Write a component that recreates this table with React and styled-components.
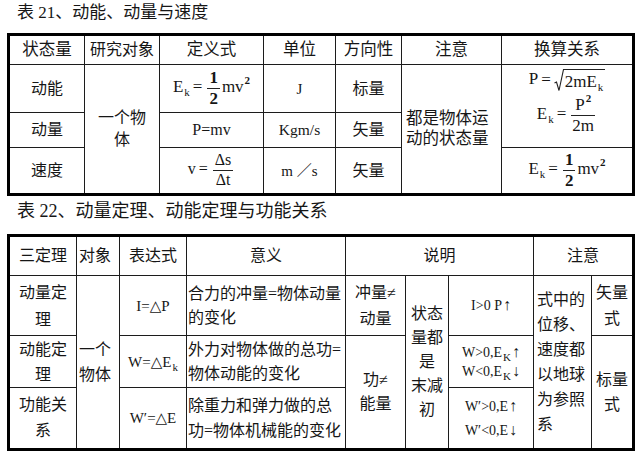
import React from "react";
import styled, { createGlobalStyle } from "styled-components";

const GlobalStyle = createGlobalStyle`
  html, body {
    margin: 0;
    padding: 0;
    background: #ffffff;
  }
  body {
    font-family: "Liberation Serif", "DejaVu Serif", "Noto Sans CJK SC", serif;
    color: #161616;
  }
  table {
    font-family: inherit;
  }
`;

const SERIF = `"Liberation Serif", "DejaVu Serif", "Noto Sans CJK SC", serif`;

const Page = styled.div`
  width: 640px;
  height: 456px;
  padding-left: 7px;
  box-sizing: border-box;
  overflow: hidden;
  font-family: ${SERIF};
`;

const Caption = styled.div`
  height: ${(p) => p.$h}px;
  line-height: ${(p) => p.$lh}px;
  padding-left: 10px;
  font-size: ${(p) => p.$size}px;
  white-space: nowrap;
`;

const Table = styled.table`
  width: 625px;
  border-collapse: collapse;
  table-layout: fixed;
  border: 3px solid #000;
  font-family: ${SERIF};
`;

const Col = styled.col`
  width: ${(p) => p.$w}px;
`;

const Row = styled.tr`
  height: ${(p) => p.$h}px;
`;

const Cell = styled.td`
  border: 1px solid #1c1c1c;
  padding: 0 ${(p) => (p.$pad ?? 4)}px;
  text-align: ${(p) => p.$align || "center"};
  vertical-align: middle;
  font-size: ${(p) => p.$size || 16}px;
  line-height: ${(p) => p.$lh || 24}px;
  font-weight: 400;
`;

const Formula = styled.span`
  display: inline-block;
  font-family: ${SERIF};
  font-size: ${(p) => p.$size || 17}px;
  white-space: nowrap;
  line-height: 20px;
`;

const FormulaStack = styled.div`
  display: flex;
  flex-direction: column;
  align-items: center;
  gap: ${(p) => p.$gap || 8}px;
  padding-bottom: 8px;
`;

const Sub = styled.span`
  font-size: 11px;
  vertical-align: -4px;
  margin-left: 1px;
  line-height: 0;
`;

const Sup = styled.span`
  font-size: 11px;
  font-weight: 700;
  vertical-align: 8px;
  margin-left: 1px;
  line-height: 0;
`;

const Eq = styled.span`
  margin: 0 3px;
`;

const Frac = styled.span`
  display: inline-flex;
  flex-direction: column;
  align-items: center;
  vertical-align: middle;
  margin: 0 2px;
  font-weight: ${(p) => (p.$bold ? 700 : 400)};
`;

const FracTop = styled.span`
  padding: 0 ${(p) => p.$wide || 2}px 1px;
  border-bottom: 1px solid #222;
  line-height: 1.05;
`;

const FracBottom = styled.span`
  padding-top: 1px;
  line-height: 1.05;
`;

const Root = styled.span`
  display: inline-flex;
  align-items: stretch;
  vertical-align: middle;
`;

const Radicand = styled.span`
  border-top: 1px solid #222;
  padding: 2px 2px 0 1px;
  line-height: 20px;
`;

const RadicalSign = () => (
  <svg width="10" height="23" viewBox="0 0 10 23" style={{ display: "block" }}>
    <path d="M0.5 14 L2.5 13 L5 21.5 L9.5 0.5 L10 0.5" fill="none" stroke="#222" strokeWidth="1.1" />
  </svg>
);

const Stat = styled.span`
  font-size: 14px;
  font-family: ${SERIF};
`;

const Arrow = styled.span`
  font-size: 16px;
  margin-left: 1px;
`;

function Table21() {
  return (
    <Table>
      <colgroup>
        <Col $w={76} />
        <Col $w={75} />
        <Col $w={104} />
        <Col $w={72} />
        <Col $w={66} />
        <Col $w={100} />
        <Col $w={132} />
      </colgroup>
      <tbody>
        <Row $h={30}>
          <Cell $size={16.5}>状态量</Cell>
          <Cell $pad={1} $size={16}>研究对象</Cell>
          <Cell $size={16.5}>定义式</Cell>
          <Cell $size={16.5}>单位</Cell>
          <Cell $size={16.5}>方向性</Cell>
          <Cell $size={16.5}>注意</Cell>
          <Cell $size={16.5}>换算关系</Cell>
        </Row>
        <Row $h={48}>
          <Cell>动能</Cell>
          <Cell rowSpan={3} $pad={8} $lh={22}>一个物体</Cell>
          <Cell>
            <Formula>
              E<Sub>k</Sub>
              <Eq>=</Eq>
              <Frac $bold>
                <FracTop>1</FracTop>
                <FracBottom>2</FracBottom>
              </Frac>
              mv<Sup>2</Sup>
            </Formula>
          </Cell>
          <Cell $size={15}>J</Cell>
          <Cell>标量</Cell>
          <Cell rowSpan={3} $align="left" $pad={4} $lh={20} $size={16.5}>
            都是物体运动的状态量
          </Cell>
          <Cell rowSpan={2}>
            <FormulaStack $gap={4}>
              <Formula>
                P<Eq>=</Eq>
                <Root>
                  <RadicalSign />
                  <Radicand>
                    2mE<Sub>k</Sub>
                  </Radicand>
                </Root>
              </Formula>
              <Formula>
                E<Sub>k</Sub>
                <Eq>=</Eq>
                <Frac>
                  <FracTop $wide={4}>
                    P<Sup>2</Sup>
                  </FracTop>
                  <FracBottom>2m</FracBottom>
                </Frac>
              </Formula>
            </FormulaStack>
          </Cell>
        </Row>
        <Row $h={35}>
          <Cell>动量</Cell>
          <Cell>
            <Formula $size={16}>P=mv</Formula>
          </Cell>
          <Cell $size={15.5}>Kgm/s</Cell>
          <Cell>矢量</Cell>
        </Row>
        <Row $h={47}>
          <Cell>速度</Cell>
          <Cell>
            <Formula $size={16}>
              v<Eq>=</Eq>
              <Frac>
                <FracTop>Δs</FracTop>
                <FracBottom>Δt</FracBottom>
              </Frac>
            </Formula>
          </Cell>
          <Cell $size={15}>m ／s</Cell>
          <Cell>矢量</Cell>
          <Cell>
            <Formula>
              E<Sub>k</Sub>
              <Eq>=</Eq>
              <Frac $bold>
                <FracTop>1</FracTop>
                <FracBottom>2</FracBottom>
              </Frac>
              mv<Sup>2</Sup>
            </Formula>
          </Cell>
        </Row>
      </tbody>
    </Table>
  );
}

function Table22() {
  return (
    <Table>
      <colgroup>
        <Col $w={68} />
        <Col $w={43} />
        <Col $w={67} />
        <Col $w={159} />
        <Col $w={60} />
        <Col $w={43} />
        <Col $w={85} />
        <Col $w={58} />
        <Col $w={42} />
      </colgroup>
      <tbody>
        <Row $h={40}>
          <Cell>三定理</Cell>
          <Cell $align="left" $pad={2}>对象</Cell>
          <Cell>表达式</Cell>
          <Cell>意义</Cell>
          <Cell colSpan={3}>说明</Cell>
          <Cell colSpan={2}>注意</Cell>
        </Row>
        <Row $h={60}>
          <Cell $pad={6} $lh={27}>动量定理</Cell>
          <Cell rowSpan={3} $align="left" $pad={2} $lh={25}>
            一个物体
          </Cell>
          <Cell>
            <Formula $size={15}>I=△P</Formula>
          </Cell>
          <Cell $align="left" $pad={1} $lh={24}>
            合力的冲量=物体动量的变化
          </Cell>
          <Cell $lh={26}>
            冲量≠
            <br />
            动量
          </Cell>
          <Cell rowSpan={3} $pad={1} $lh={24}>
            状态
            <br />
            量都
            <br />
            是
            <br />
            末减
            <br />
            初
          </Cell>
          <Cell>
            <Stat>
              I&gt;0 P<Arrow>↑</Arrow>
            </Stat>
          </Cell>
          <Cell rowSpan={3} $align="left" $pad={3} $lh={25}>
            式中的位移、速度都以地球为参照系
          </Cell>
          <Cell $pad={2} $lh={26}>
            矢量
            <br />
            式
          </Cell>
        </Row>
        <Row $h={52}>
          <Cell $pad={6} $lh={25}>动能定理</Cell>
          <Cell>
            <Formula $size={15}>
              W=△E<Sub>k</Sub>
            </Formula>
          </Cell>
          <Cell $align="left" $pad={1} $lh={24}>
            外力对物体做的总功=物体动能的变化
          </Cell>
          <Cell rowSpan={2} $lh={24}>
            功≠
            <br />
            能量
          </Cell>
          <Cell $lh={18}>
            <Stat>
              W&gt;0,E<Sub>K</Sub>
              <Arrow>↑</Arrow>
              <br />
              W&lt;0,E<Sub>K</Sub>
              <Arrow>↓</Arrow>
            </Stat>
          </Cell>
          <Cell rowSpan={2} $pad={2} $lh={25}>
            标量
            <br />
            式
          </Cell>
        </Row>
        <Row $h={62}>
          <Cell $pad={6} $lh={26}>功能关系</Cell>
          <Cell>
            <Formula $size={15}>W′=△E</Formula>
          </Cell>
          <Cell $align="left" $pad={1} $lh={25}>
            除重力和弹力做的总功=物体机械能的变化
          </Cell>
          <Cell $lh={23}>
            <Stat>
              W′&gt;0,E<Arrow>↑</Arrow>
              <br />
              W′&lt;0,E<Arrow>↓</Arrow>
            </Stat>
          </Cell>
        </Row>
      </tbody>
    </Table>
  );
}

export default function App() {
  return (
    <Page>
      <GlobalStyle />
      <Caption $h={33} $lh={26} $size={17}>
        表 21、动能、动量与速度
      </Caption>
      <Table21 />
      <Caption $h={38} $lh={30} $size={18}>
        表 22、动量定理、动能定理与功能关系
      </Caption>
      <Table22 />
    </Page>
  );
}
